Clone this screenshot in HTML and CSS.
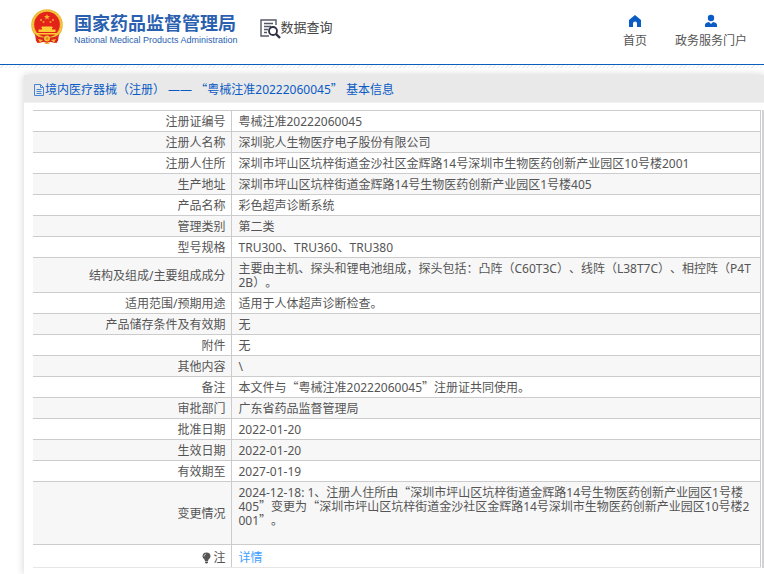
FILE: index.html
```html
<!DOCTYPE html>
<html lang="zh-CN">
<head>
<meta charset="utf-8">
<meta name="viewport" content="width=device-width, initial-scale=1">
<title>国家药品监督管理局 数据查询</title>
<link rel="stylesheet" href="styles.css">
</head>
<body>
<header class="header">
  <div class="brand">
    <svg class="emblem" viewBox="0 0 32 36" aria-hidden="true">
      <path d="M5 24 6 34l5-2 5 2 5-2 5 2 1-10z" fill="#d9261c"/>
      <circle cx="16" cy="16" r="15.800" fill="#eeb52f"/>
      <circle cx="16" cy="16" r="14.200" fill="none" stroke="#f8d65b" stroke-width="1" stroke-dasharray="2 1"/>
      <circle cx="16" cy="15.500" r="12.800" fill="#e32219"/>
      <path d="m16 5 .8 2.100h2.200l-1.800 1.300.7 2.200-1.900-1.300-1.900 1.300.7-2.200L13 7.100h2.200z" fill="#f5b52e"/>
      <g fill="#f5a52e"><circle cx="10" cy="11" r="1"/><circle cx="12.500" cy="13" r="1"/><circle cx="19.500" cy="13" r="1"/><circle cx="22" cy="11" r="1"/></g>
      <path d="M11 17.500h10l1 1.500h-1v1.500h3.500V23h-17v-2.500H11V19h-1zM6 24h20v1.500H6z" fill="#ffcc37"/>
      <path d="M4 25c4 4 8 4 12 3 4 1 8 1 12-3l-1 7-3 2-8-2-8 2-3-2z" fill="#d9261c"/>
      <circle cx="16" cy="29.500" r="3" fill="#f5bd32"/><circle cx="16" cy="29.500" r="1.200" fill="#d98e20"/>
      <path d="m7 30 5 1-3 2.500zm18 0-5 1 3 2.500zM13 33l3 1 3-1-1 2h-4z" fill="#f4b632"/>
    </svg>
    <div class="brand-text">
      <div class="brand-cn">国家药品监督管理局</div>
      <div class="brand-en">National Medical Products Administration</div>
    </div>
  </div>
  <div class="query">
    <svg class="query-icon" viewBox="0 0 21 20" aria-hidden="true">
      <path d="M16 6V1H1v16h8" fill="none" stroke="#555867" stroke-width="1.400"/>
      <path d="M4 4.500h9M4 7.500h7M4 10.500h4M4 13.500h3" stroke="#555867" stroke-width="1.400"/>
      <circle cx="13" cy="12" r="4" fill="#fff" stroke="#2e3045" stroke-width="1.800"/>
      <path d="m16 15 4 4" stroke="#2e3045" stroke-width="2.400"/>
    </svg>
    <span>数据查询</span>
  </div>
  <nav class="nav">
    <a href="#home">
      <svg viewBox="0 0 14 14" aria-hidden="true"><path d="M7 1 1 6v7h4V9.500a2 2 0 0 1 4 0V13h4V6z" fill="#0a5bc4"/></svg>
      <span>首页</span>
    </a>
    <a href="#portal">
      <svg viewBox="0 0 14 14" aria-hidden="true"><circle cx="7" cy="4" r="3.200" fill="#0a5bc4"/><path d="M1 13v-2q0-2.500 4-3l2 2 2-2q4 .5 4 3v2z" fill="#0a5bc4"/></svg>
      <span>政务服务门户</span>
    </a>
  </nav>
</header>
<div class="hatch"></div>
<main class="panel">
  <h1 class="title">
    <svg class="doc" viewBox="0 0 11 12" aria-hidden="true"><path d="M.5.500h6l3 3v8h-9zM6.500.5v3h3M2.500 5.500h5M2.500 7.500h5M2.500 9.500h5" fill="none" stroke="#4584d2"/></svg>
    <span>境内医疗器械（注册） —— <span class="cjk">“</span>粤械注准20222060045<span class="cjk">”</span> 基本信息</span>
  </h1>
  <div class="table-box">
    <table class="info">
      <colgroup><col class="label-col"><col></colgroup>
      <tbody>
        <tr><th scope="row">注册证编号</th><td>粤械注准20222060045</td></tr>
        <tr><th scope="row">注册人名称</th><td>深圳驼人生物医疗电子股份有限公司</td></tr>
        <tr><th scope="row">注册人住所</th><td>深圳市坪山区坑梓街道金沙社区金辉路14号深圳市生物医药创新产业园区10号楼2001</td></tr>
        <tr><th scope="row">生产地址</th><td>深圳市坪山区坑梓街道金辉路14号生物医药创新产业园区1号楼405</td></tr>
        <tr><th scope="row">产品名称</th><td>彩色超声诊断系统</td></tr>
        <tr><th scope="row">管理类别</th><td>第二类</td></tr>
        <tr><th scope="row">型号规格</th><td>TRU300、TRU360、TRU380</td></tr>
        <tr><th scope="row">结构及组成/主要组成成分</th><td>主要由主机、探头和锂电池组成，探头包括：凸阵（C60T3C）、线阵（L38T7C）、相控阵（P4T<wbr>2B）。</td></tr>
        <tr><th scope="row">适用范围/预期用途</th><td>适用于人体超声诊断检查。</td></tr>
        <tr><th scope="row">产品储存条件及有效期</th><td>无</td></tr>
        <tr><th scope="row">附件</th><td>无</td></tr>
        <tr><th scope="row">其他内容</th><td>\</td></tr>
        <tr><th scope="row">备注</th><td>本文件与<span class="cjk">“</span>粤械注准20222060045<span class="cjk">”</span>注册证共同使用。</td></tr>
        <tr><th scope="row">审批部门</th><td>广东省药品监督管理局</td></tr>
        <tr><th scope="row">批准日期</th><td>2022-01-20</td></tr>
        <tr><th scope="row">生效日期</th><td>2022-01-20</td></tr>
        <tr><th scope="row">有效期至</th><td>2027-01-19</td></tr>
        <tr><th scope="row">变更情况</th><td>2024-12-18: 1、注册人住所由<span class="cjk">“</span>深圳市坪山区坑梓街道金辉路14号生物医药创新产业园区1号楼<br>405<span class="cjk">”</span>变更为<span class="cjk">“</span>深圳市坪山区坑梓街道金沙社区金辉路14号深圳市生物医药创新产业园区10号楼2<wbr>001<span class="cjk">”</span>。<br><br></td></tr>
        <tr class="note"><th scope="row"><svg class="bulb" viewBox="0 0 9 12" aria-hidden="true"><path d="M4.500.5a4 4 0 0 0-4 4C.5 6.500 3 7 3 9h3c0-2 2.500-2.500 2.500-4.500a4 4 0 0 0-4-4zM3 9.500h3v1.200L5 11.500H4l-1-.8z" fill="#555"/><path d="M2 4.500Q2 2.500 4 2" fill="none" stroke="#ddd" stroke-width=".8"/></svg>注</th><td><a href="#detail">详情</a></td></tr>
      </tbody>
    </table>
  </div>
</main>
</body>
</html>
```

FILE: styles.css
```css
* {
  box-sizing: border-box;
}

body {
  margin: 0;
  background: #fff;
  color: #555;
  font: 12px/14px "Noto Sans", "Noto Sans CJK SC", sans-serif;
  text-spacing-trim: space-all;
  overflow-x: hidden;
}

a {
  text-decoration: none;
}

.cjk {
  font-family: "Noto Sans CJK SC", sans-serif;
  line-height: 10px;
}

.header {
  display: flex;
  align-items: flex-start;
  height: 65px;
  padding: 9px 17px 0 31px;
  border-bottom: 1px solid #0a5fbd;
}

.hatch {
  height: 3px;
  background: repeating-linear-gradient(135deg, #fff 0 2px, #eee 2px 3px);
}

.brand {
  display: flex;
  gap: 11px;
}

.emblem {
  width: 32px;
  height: 36px;
}

.brand-text {
  padding-top: 4px;
  color: #2b5fb0;
  white-space: nowrap;
}

.brand-cn {
  font-size: 18px;
  line-height: 20px;
  font-weight: 700;
}

.brand-en {
  font: 9px/14px "Liberation Sans", sans-serif;
}

.query {
  display: flex;
  align-items: flex-start;
  margin-left: 22px;
  padding-top: 10px;
  font-size: 13px;
  line-height: 16px;
  color: #444;
}

.query-icon {
  width: 21px;
  height: 20px;
}

.nav {
  display: flex;
  gap: 28px;
  margin-left: auto;
  padding-top: 5px;
}

.nav a {
  display: flex;
  flex-direction: column;
  align-items: center;
  gap: 6px;
  color: #555;
}

.nav svg {
  width: 14px;
  height: 14px;
}

.panel {
  margin: 7px 0 0 24px;
  padding-bottom: 6px;
  background: #fff;
  box-shadow: 0 0 8px rgba(0, 0, 0, 0.18);
}

.title {
  display: flex;
  align-items: center;
  height: 28px;
  margin: 0;
  padding: 2px 0 0 10px;
  background: #e9e9e9;
  border-bottom: 1px solid #f0f0f4;
  color: #0a5bc4;
  font-size: 12px;
  font-weight: 400;
}

.doc {
  width: 11px;
  height: 12px;
}

.table-box {
  margin: 7px 0 0 9px;
  padding-right: 1px;
  border-right: 2px solid #d2d2d6;
}

.info {
  width: 100%;
  border-collapse: collapse;
  table-layout: fixed;
}

.label-col {
  width: 198px;
}

.info th,
.info td {
  padding: 4px 5px 2px 7px;
  border: 1px solid #ccc;
  font-weight: 400;
  word-break: break-all;
}

.info th {
  border-left: 0;
  text-align: right;
}

.info tr:nth-child(even) {
  background: #f7f7f7;
}

.info .note th,
.info .note td {
  padding-top: 6px;
  border-bottom-color: #e6e6e6;
}

.info .note a {
  color: #409eff;
}

.bulb {
  width: 9px;
  height: 12px;
  margin-right: 2px;
  vertical-align: -2px;
}
```
